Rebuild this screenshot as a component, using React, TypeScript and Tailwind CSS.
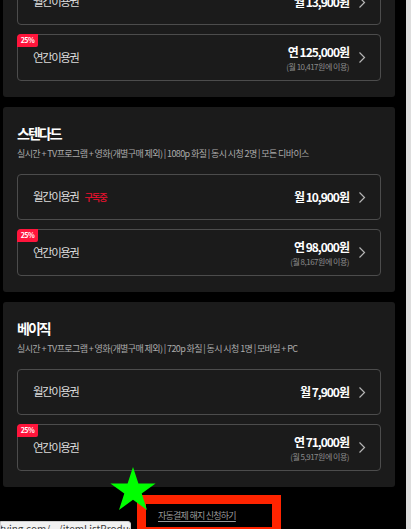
import React from 'react'

interface Plan {
  name: string
  desc: string
  monthly: string
  yearly: string
  perMonth: string
  subscribed?: boolean
}

const plans: Plan[] = [
  {
    name: '프리미엄',
    desc: '실시간 + TV프로그램 + 영화(개별구매 제외) | 1080p 화질 | 동시 시청 4명 | 모든 디바이스',
    monthly: '월 13,900원',
    yearly: '연 125,000원',
    perMonth: '(월 10,417원에 이용)',
  },
  {
    name: '스텐다드',
    desc: '실시간 + TV프로그램 + 영화(개별구매 제외) | 1080p 화질 | 동시 시청 2명 | 모든 디바이스',
    monthly: '월 10,900원',
    yearly: '연 98,000원',
    perMonth: '(월 8,167원에 이용)',
    subscribed: true,
  },
  {
    name: '베이직',
    desc: '실시간 + TV프로그램 + 영화(개별구매 제외) | 720p 화질 | 동시 시청 1명 | 모바일 + PC',
    monthly: '월 7,900원',
    yearly: '연 71,000원',
    perMonth: '(월 5,917원에 이용)',
  },
]

const Chevron = () => (
  <svg width="8" height="13" viewBox="0 0 8 13" className="ml-[9px] shrink-0">
    <path d="M1.5 1.5 L6.5 6.5 L1.5 11.5" fill="none" stroke="#b5b5b5" strokeWidth="1.2" />
  </svg>
)

const PlanCard = ({ plan, first }: { plan: Plan; first?: boolean }) => {
  return (
    <div
      className={`w-[392px] bg-[#1b1b1b] rounded-[3px] pt-[15px] pb-[16px] ${first ? '-mt-[88px]' : 'mt-[10px]'}`}
    >
      <div className="px-[14px]">
        <div className="h-[22px] leading-[22px] text-[14px] tracking-[-2px] font-bold text-white">{plan.name}</div>
        <div className="mt-[3px] h-[14px] leading-[14px] text-[9px] tracking-[-0.6px] text-[#ababab] whitespace-nowrap">
          {plan.desc}
        </div>
      </div>

      {/* Monthly */}
      <div className="mx-[14px] mt-[13px] h-[46px] border border-[#4c4c4c] rounded-[4px] flex items-center pl-[15px] pr-[14px]">
        <span className="text-[11.5px] tracking-[-1.5px] text-[#dcdcdc]">월간이용권</span>
        {plan.subscribed && (
          <span className="ml-[6px] text-[9.5px] tracking-[-1.5px] font-medium text-[#f0102f]">구독중</span>
        )}
        <span className="ml-auto text-[12px] tracking-[-1px] font-bold text-white">{plan.monthly}</span>
        <Chevron />
      </div>

      {/* Yearly */}
      <div className="relative mx-[14px] mt-[9px] h-[47px] border border-[#4c4c4c] rounded-[4px] flex items-center pl-[15px] pr-[14px]">
        <div className="absolute -left-px -top-px w-[21px] h-[13px] bg-[#ff153c] rounded-tl-[4px] rounded-br-[2px] flex items-center justify-center text-[7px] font-bold text-white tracking-[-0.5px]">
          25%
        </div>
        <span className="text-[11.5px] tracking-[-1.5px] text-[#dcdcdc]">연간이용권</span>
        <div className="ml-auto flex flex-col items-end">
          <span className="text-[12px] tracking-[-1px] leading-[17px] font-bold text-white">{plan.yearly}</span>
          <span className="mt-[1px] text-[8px] tracking-[-0.5px] leading-[12px] text-[#8c8c8c]">{plan.perMonth}</span>
        </div>
        <Chevron />
      </div>
    </div>
  )
}

const App = () => {
  return (
    <div
      className="relative w-[411px] h-[529px] bg-black overflow-hidden flex"
      style={{ fontFamily: '"Noto Sans CJK KR", "Noto Sans", sans-serif' }}
    >
      <div className="w-[406px] pl-[3px] flex flex-col">
        {plans.map((p, i) => (
          <PlanCard key={p.name} plan={p} first={i === 0} />
        ))}
        <div className="mt-[22px] pl-[155px] text-[9px] tracking-[-0.75px] text-[#9a9a9a] underline underline-offset-2">
          자동결제 해지 신청하기
        </div>
      </div>
      <div className="w-[5px] bg-[#dedede]" />

      {/* annotation: red box */}
      <div className="absolute left-[137px] top-[495px] w-[144px] h-[41px] border-[9px] border-[#ff2400]" />

      {/* annotation: green star */}
      <svg className="absolute left-[110px] top-[467px]" width="46" height="43" viewBox="0 0 46 43">
        <polygon points="23,0 28.4,16.4 45.6,16.4 31.7,26.6 37,43 23,32.8 9,43 14.3,26.6 0.4,16.4 17.6,16.4" fill="#00ff00" />
      </svg>

      {/* browser status bar */}
      <div className="absolute left-0 top-[521px] w-[131px] h-[14px] bg-[#f1f1f1] border border-[#cfcfcf] rounded-tr-[3px] overflow-hidden">
        <div className="-ml-[1px] mt-[1px] text-[10px] leading-[12px] text-[#3a3a3a] whitespace-nowrap">
          tving.com/.../itemListProduct
        </div>
      </div>
    </div>
  )
}

export default App
